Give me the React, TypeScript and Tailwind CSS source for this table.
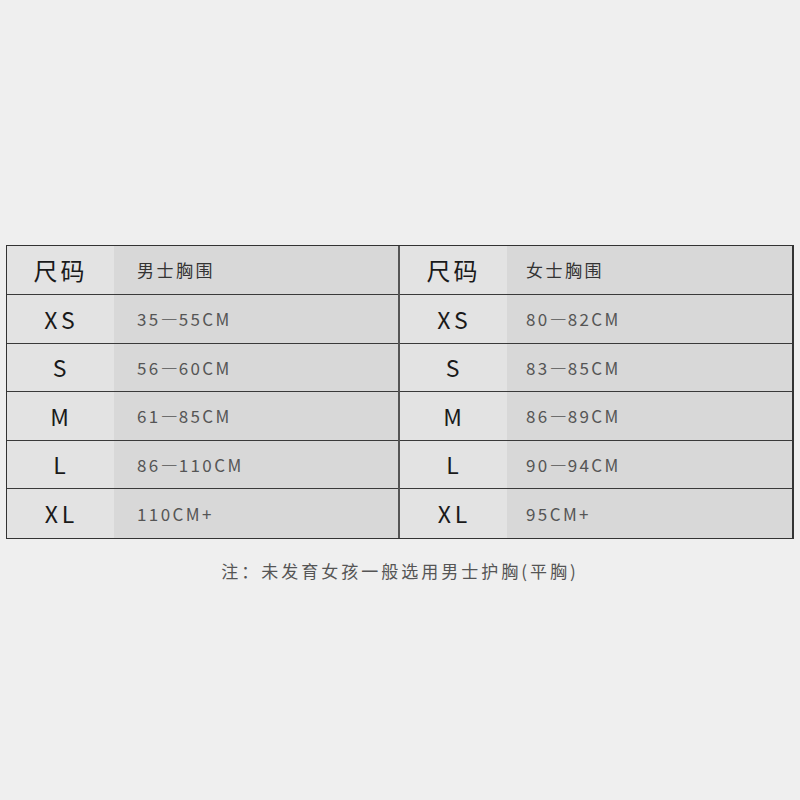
const men = [
  ["XS", "35", "55CM"],
  ["S", "56", "60CM"],
  ["M", "61", "85CM"],
  ["L", "86", "110CM"],
  ["XL", "110CM+", ""],
];

const women = [
  ["XS", "80", "82CM"],
  ["S", "83", "85CM"],
  ["M", "86", "89CM"],
  ["L", "90", "94CM"],
  ["XL", "95CM+", ""],
];

function Half({ title, rows, pad }: { title: string; rows: string[][]; pad: string }) {
  return (
    <div className="flex-1 flex flex-col">
      <div className="flex h-[49px] border-b border-[#3a3a3a]">
        <div className="w-[107px] bg-[#e3e3e3] flex items-center justify-center text-[24px] text-[#1a1a1a] tracking-[3px]">
          尺码
        </div>
        <div className={`flex-1 bg-[#d8d8d8] flex items-center text-[17px] text-[#333] tracking-[2.5px] ${pad}`}>
          {title}
        </div>
      </div>
      {rows.map(([size, from, to], i) => (
        <div
          key={size}
          className={`flex h-[48.6px] ${i < rows.length - 1 ? "border-b border-[#3a3a3a]" : ""}`}
        >
          <div className="w-[107px] bg-[#e3e3e3] flex items-center justify-center text-[23px] text-[#1a1a1a] tracking-[4px] pl-[2px]">
            {size}
          </div>
          <div className={`flex-1 bg-[#d8d8d8] flex items-center text-[17px] text-[#555] tracking-[2.4px] ${pad}`}>
            {from}
            {to && (
              <>
                <span className="[font-feature-settings:'fwid'] tracking-[1px]">—</span>
                {to}
              </>
            )}
          </div>
        </div>
      ))}
    </div>
  );
}

export default function App() {
  return (
    <div
      className="w-[800px] h-[800px] bg-[#efefef] pt-[245px] px-[6px]"
      style={{ fontFamily: '"Noto Sans CJK SC", "Noto Sans", sans-serif' }}
    >
      <div className="flex w-[788px] border border-[#333] border-r-2">
        <Half title="男士胸围" rows={men} pad="pl-[23px]" />
        <div className="w-[2px] bg-[#555] -ml-[1px]" />
        <Half title="女士胸围" rows={women} pad="pl-[19px]" />
      </div>
      <p className="mt-[19px] text-center text-[17px] text-[#555] tracking-[3px]">
        注：未发育女孩一般选用男士护胸(平胸)
      </p>
    </div>
  );
}
